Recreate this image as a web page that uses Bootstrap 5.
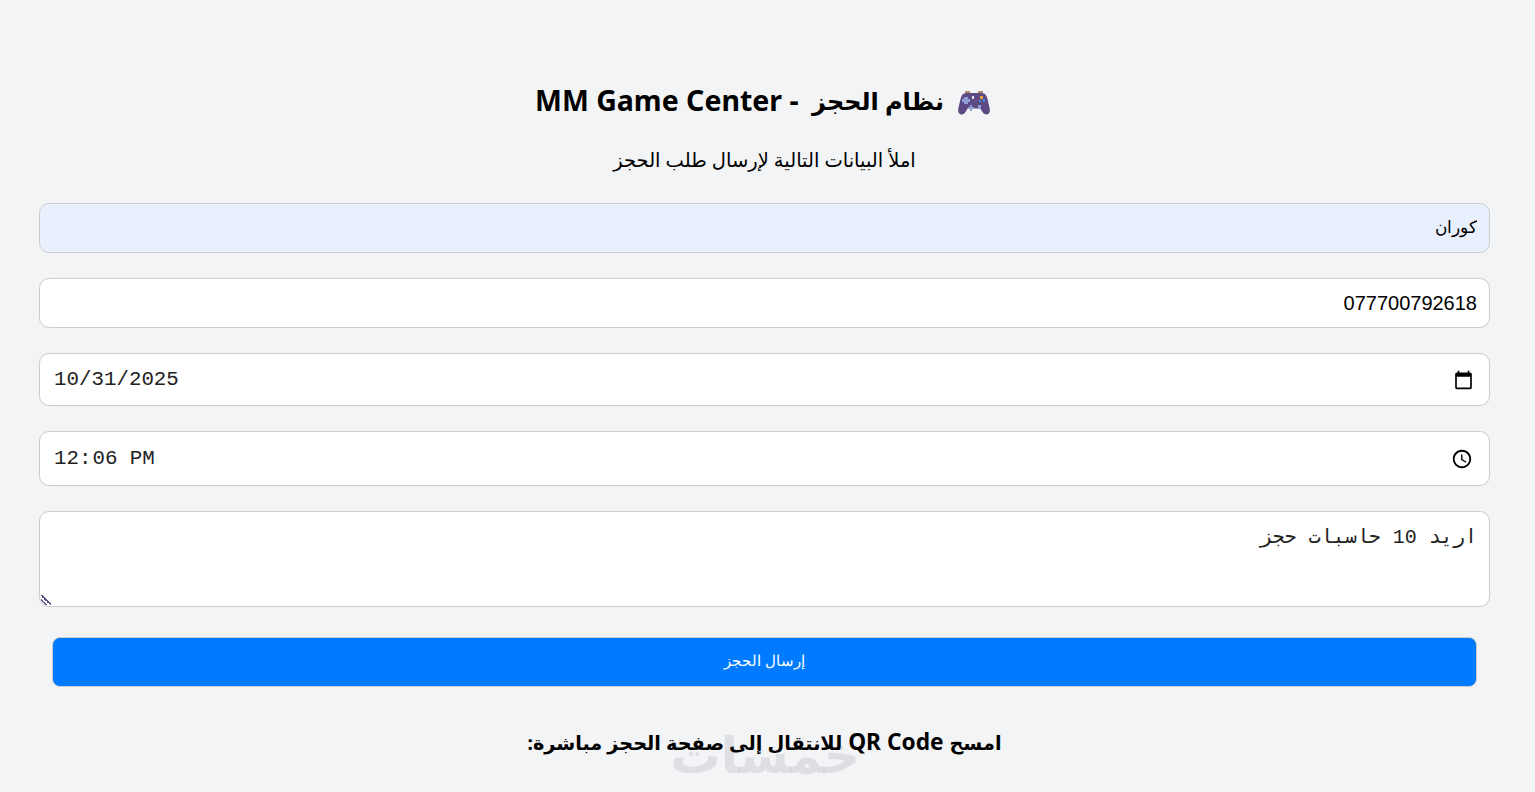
<!DOCTYPE html>
<html lang="ar" dir="rtl">
<head>
  <meta charset="UTF-8">
  <meta name="viewport" content="width=device-width, initial-scale=1.0">
  <title>MM Game Center</title>
  <link href="https://cdn.jsdelivr.net/npm/bootstrap@5.3.3/dist/css/bootstrap.min.css" rel="stylesheet">
  <style>
    html, body {
      height: 100%;
      overflow: hidden;
    }

    body {
      background: #f3f4f6;
      color: #000;
      font-family: "Noto Sans", "Open Sans", "DejaVu Sans", sans-serif;
    }

    .page-wrap {
      width: 1529px;
      margin-right: 6px;
      padding: 83px 39px 0;
    }

    .page-title {
      font-size: 28.5px;
      font-weight: 700;
      line-height: 34px;
      margin: 0 0 29px;
    }

    .title-ar {
      font-size: 24px;
      margin-left: 6px;
      vertical-align: 1px;
    }

    .page-sub {
      font-size: 19.5px;
      line-height: 26px;
      margin: 0 0 30px;
    }

    .pad-icon {
      width: 32px;
      height: 25px;
      vertical-align: -4px;
      margin-left: 14px;
      margin-right: 4px;
    }

    .booking-form .form-control {
      border: 1px solid #ccc;
      border-radius: 10px;
      padding: 12px;
      font-size: 20px;
      line-height: 24px;
      color: #000;
      margin-bottom: 25px;
      box-shadow: none;
    }

    .booking-form .field-text {
      font-family: "Liberation Sans", Arial, sans-serif;
      height: 50px;
      text-align: right;
    }

    .booking-form .field-filled {
      background: #e8f0fe;
      font-size: 17px;
      padding-bottom: 14px;
    }

    .booking-form .field-date,
    .booking-form .field-time {
      font-family: "Liberation Mono", monospace;
      font-size: 20.8px;
      color: #222;
      padding: 14px 13px 12px 14px;
    }

    .booking-form .field-date {
      height: 53px;
    }

    .booking-form .field-time {
      height: 55px;
      padding-top: 13px;
    }

    .field-time::-webkit-datetime-edit-ampm-field {
      margin-left: 4px;
    }

    .booking-form textarea.field-note {
      font-family: "Liberation Mono", monospace;
      color: #222;
      height: 96px;
      min-height: 0;
      padding-top: 14px;
      margin-bottom: 30px;
      resize: both;
    }

    .field-note::-webkit-resizer {
      background: linear-gradient(45deg, transparent 24%, #6a5b90 24% 33%, transparent 33% 45%, #5c4a85 45% 58%, transparent 58%) no-repeat 1px 4px / 10px 10px;
    }

    .send-btn {
      display: block;
      width: 1425px;
      height: 50px;
      margin: 0 13px;
      padding-bottom: 8px;
      background: #007bff;
      border: 1px solid #ccc;
      border-radius: 8px;
      color: #fff;
      font-family: "Liberation Sans", Arial, sans-serif;
      font-size: 15.3px;
    }

    .send-btn:hover {
      background: #0069d9;
      color: #fff;
    }

    .qr-title {
      font-size: 22.7px;
      font-weight: 700;
      line-height: 30px;
      margin: 40px 0 0;
    }

    .qr-ar {
      font-size: 19.3px;
    }

    .site-mark {
      position: absolute;
      left: 675px;
      top: 719px;
      width: 185px;
      font-family: "Noto Sans", "DejaVu Sans", sans-serif;
      font-size: 50px;
      font-weight: 700;
      line-height: 70px;
      text-align: center;
      color: rgba(40, 40, 45, 0.1);
      pointer-events: none;
    }
  </style>
</head>
<body>

  <div class="page-wrap text-center">
    <h1 class="page-title">
      <svg class="pad-icon" viewBox="0 0 32 25" aria-hidden="true">
        <path fill="#5c4a85" d="M8 3h16c3 0 4.500 2 5.500 6l2.300 10c.5 3-1 5.500-3.300 5.500-2 0-3-1-5-4l-1-2H9.500l-1 2c-2 3-3 4-5 4C1.200 24.500-.3 22 .2 19L2.500 9C3.500 5 5 3 8 3z"/>
        <path fill="#b08a6a" d="M7 1h5v2H7zM20 1h5v2h-5z"/>
        <path fill="#8f9fd6" d="M6 7h4v2h2v3h-2v2H6v-2H4V9h2z"/>
        <path fill="#e6e6f0" d="M14 6h2v3h-2z"/>
        <path fill="#e8a33c" d="M22 6h3v3h-3z"/>
        <path fill="#3d8ee0" d="M25 9h2v3h-2zM21 10h2v2h-2z"/>
        <path fill="#8f9fd6" d="M12 15h2v2h2v2h-2v2h-2v-2h-2v-2h2zM20 15h3v3h-3z"/>
      </svg><span class="title-ar">نظام الحجز</span> - MM Game Center
    </h1>
    <p class="page-sub">املأ البيانات التالية لإرسال طلب الحجز</p>

    <form class="booking-form text-end" onsubmit="return false">
      <input type="text" class="form-control field-text field-filled" value="كوران">
      <input type="tel" class="form-control field-text" value="077700792618">
      <input type="date" class="form-control field-date" dir="ltr" value="2025-10-31">
      <input type="time" class="form-control field-time" dir="ltr" value="12:06">
      <textarea class="form-control field-note" rows="3">اريد 10 حاسبات حجز</textarea>
      <button type="submit" class="btn send-btn">إرسال الحجز</button>
    </form>

    <h3 class="qr-title"><span class="qr-ar">امسح</span> QR Code <span class="qr-ar">للانتقال إلى صفحة الحجز مباشرة:</span></h3>
  </div>

  <div class="site-mark">خمسات</div>

  <script src="https://cdn.jsdelivr.net/npm/bootstrap@5.3.3/dist/js/bootstrap.bundle.min.js"></script>
</body>
</html>
